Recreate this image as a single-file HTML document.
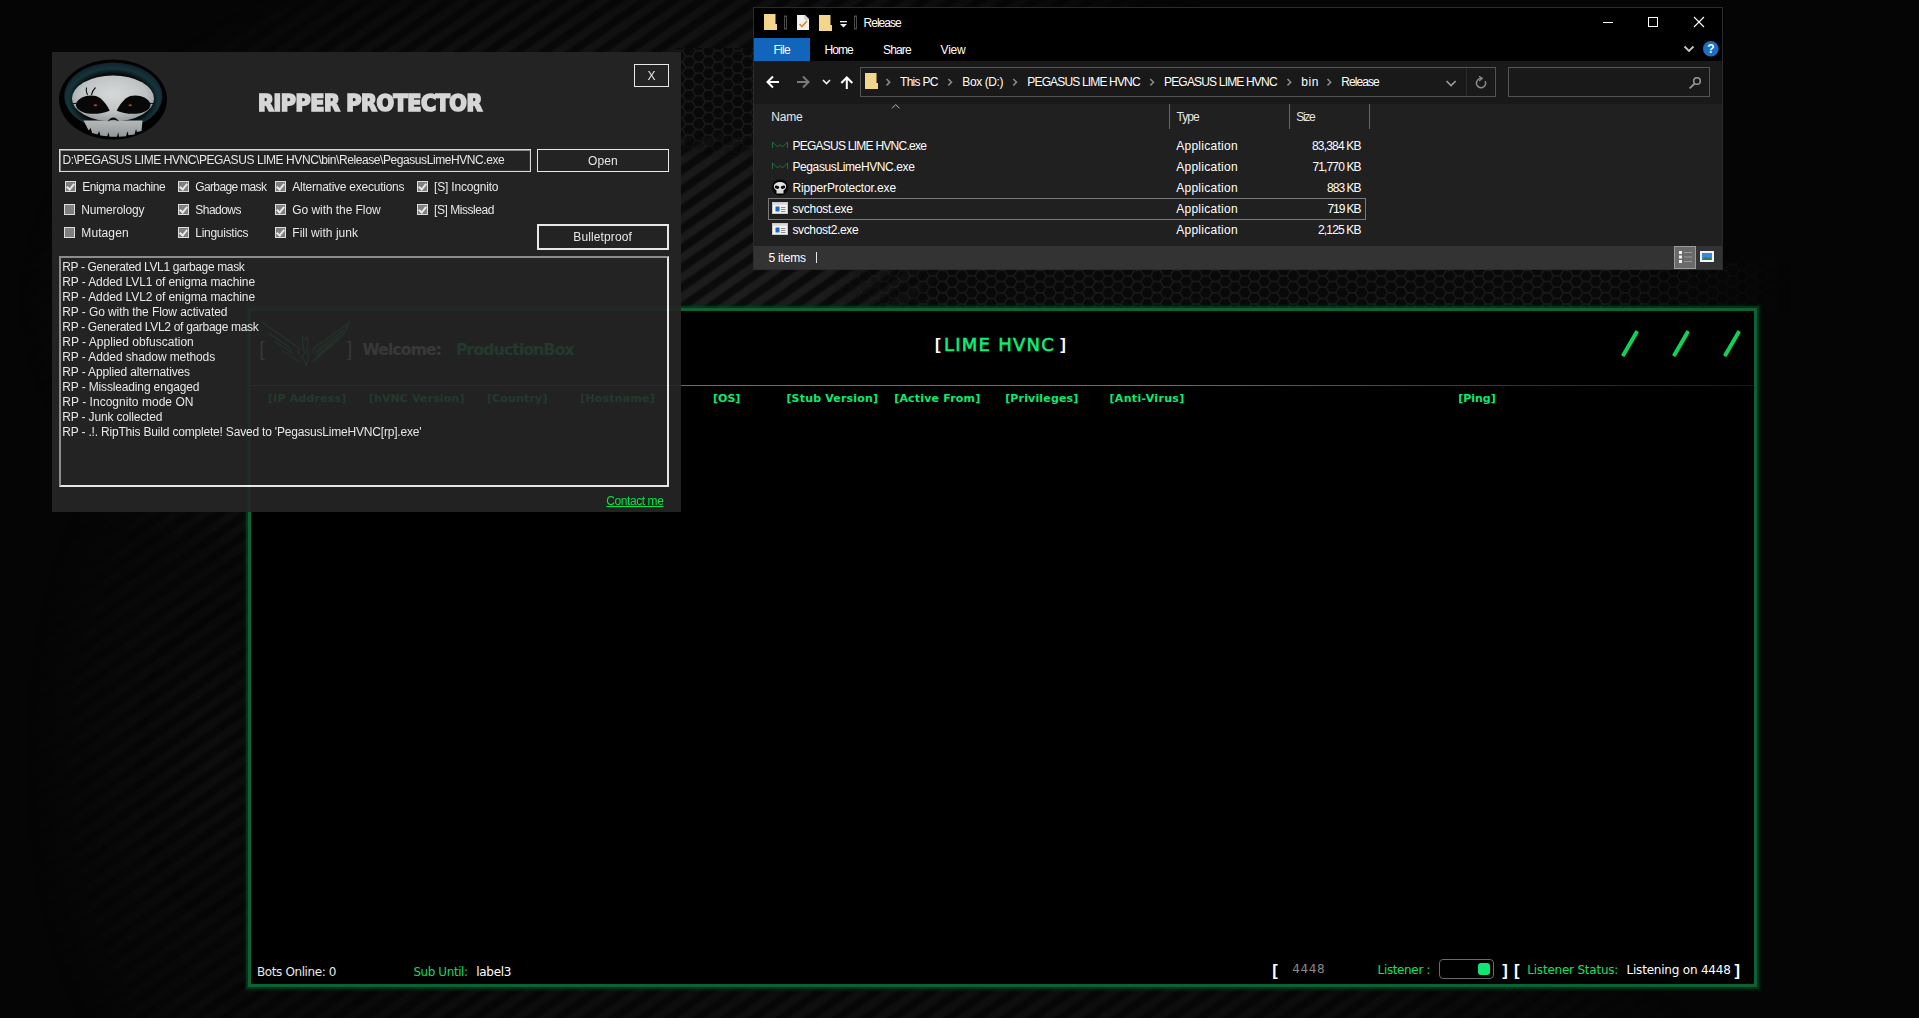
<!DOCTYPE html>
<html lang="en">
<head>
<meta charset="utf-8">
<title>Desktop</title>
<style>
*{box-sizing:border-box;margin:0;padding:0}
html,body{width:1919px;height:1018px;overflow:hidden;background:#060606}
body{position:relative;font-family:"Liberation Sans",sans-serif}
.abs{position:absolute}
.t{position:absolute;white-space:pre;display:block}
#desk{position:absolute;left:0;top:0;width:1919px;height:1018px;overflow:hidden;background:#050505}
#desk .stripes{position:absolute;left:0;top:0;width:1919px;height:1018px;
  background:repeating-linear-gradient(145deg,#0b0b0b 0,#0b0b0b 5px,#1d1d1d 8px,#1d1d1d 13px,#0b0b0b 16px);
  -webkit-mask-image:radial-gradient(ellipse 700px 400px at 720px 300px,#000 0%,rgba(0,0,0,.85) 40%,rgba(0,0,0,.5) 70%,rgba(0,0,0,.2) 90%,rgba(0,0,0,0) 100%),
    radial-gradient(ellipse 800px 130px at 900px 1030px,rgba(0,0,0,.42) 0%,rgba(0,0,0,.3) 60%,rgba(0,0,0,0) 100%),
    radial-gradient(ellipse 190px 380px at 215px 760px,rgba(0,0,0,.35) 0%,rgba(0,0,0,0) 100%);
  mask-image:radial-gradient(ellipse 700px 400px at 720px 300px,#000 0%,rgba(0,0,0,.85) 40%,rgba(0,0,0,.5) 70%,rgba(0,0,0,.2) 90%,rgba(0,0,0,0) 100%),
    radial-gradient(ellipse 800px 130px at 900px 1030px,rgba(0,0,0,.42) 0%,rgba(0,0,0,.3) 60%,rgba(0,0,0,0) 100%),
    radial-gradient(ellipse 190px 380px at 215px 760px,rgba(0,0,0,.35) 0%,rgba(0,0,0,0) 100%)}
#desk svg{position:absolute;left:0;top:0}
/* ---------- HVNC ---------- */
#hv{position:absolute;left:248px;top:308px;width:1509px;height:679px;background:#000;
  border:3px solid #0b6232;box-shadow:0 0 0 2px rgba(8,72,36,.55),0 0 2px 3.500px rgba(8,60,30,.35)}
#hv .line{position:absolute;left:0;top:74px;width:1503px;height:1px;
  background:linear-gradient(90deg,#0c7a3c 0%,#12a352 35%,#12a352 60%,#0a5a2b 80%,#04200f 100%)}
.slash{position:absolute;width:3.6px;height:29px;margin-left:-.3px;background:#10d258;transform:rotate(30deg);transform-origin:50% 50%;border-radius:1px}
#tog{position:absolute;left:1188px;top:648px;width:55px;height:20px;border:1px solid #6a6a6a;border-radius:4px}
#tog i{position:absolute;left:38px;top:3px;width:12px;height:12px;background:#10e673;border-radius:3px}
/* ---------- Explorer ---------- */
#exp{position:absolute;left:754px;top:8px;width:968px;height:261px;background:#202020;overflow:hidden;
  box-shadow:0 0 0 1px #2b2b2b}
#exp .title{position:absolute;left:0;top:0;width:968px;height:53px;background:#000}
#exp .filetab{position:absolute;left:0;top:30px;width:56px;height:23px;background:#1165bb}
#exp .addr{position:absolute;left:0;top:53px;width:968px;height:43px;background:#191919}
#exp .abox{position:absolute;left:106px;top:59px;width:636px;height:30px;border:1px solid #535353}
#exp .abox .div{position:absolute;left:605px;top:0;width:1px;height:28px;background:#2b2b2b}
#exp .sbox{position:absolute;left:754px;top:59px;width:202px;height:30px;border:1px solid #535353}
#exp .cdiv{position:absolute;top:96px;width:1px;height:25px;background:#636363}
#exp .sel{position:absolute;left:14px;top:190px;width:598px;height:22px;border:1px solid #7a7a7a}
#exp .status{position:absolute;left:0;top:238px;width:968px;height:23px;background:#333}
#exp .status .sep{position:absolute;left:62px;top:6px;width:1px;height:11px;background:#e6e6e6}
/* ---------- Ripper ---------- */
#rip{position:absolute;left:52px;top:52px;width:629px;height:460px;background:#262626;opacity:.9}
#rip .btn{position:absolute;border:1px solid #fff}
#rip .path{position:absolute;left:7px;top:97px;width:472px;height:23px;border:1px solid #f0f0f0;box-shadow:inset 1px 1px 0 #9a9a9a, inset -1px -1px 0 #3a3a3a}
#rip .log{position:absolute;left:7px;top:204px;width:610px;height:231px;border:2px solid;border-color:#9a9a9a #fff #fff #9a9a9a}
.cb{position:absolute;width:11px;height:11px;border:1px solid #f4f4f4;background:#8c8c8c}
.cb.on:after{content:"";position:absolute;left:2px;top:0px;width:3px;height:6px;border:solid #fff;border-width:0 2px 2px 0;transform:rotate(40deg)}
</style>
</head>
<body>
<div id="desk">
  <div class="stripes"></div>
  <svg width="1919" height="1018" viewBox="0 0 1919 1018">
    <defs>
      <pattern id="hex" width="19.5" height="11.26" patternUnits="userSpaceOnUse">
        <rect width="19.5" height="11.26" fill="#090909"/>
        <path d="M0 5.63L3.250 0L9.750 0L13 5.63L9.750 11.26L3.250 11.26ZM13 5.63L19.5 5.63" fill="none" stroke="#1d1d1d" stroke-width="1.2"/>
      </pattern>
      <linearGradient id="hfade" x1="0" y1="0" x2="1" y2="0"><stop offset="0" stop-color="#fff" stop-opacity="0"/><stop offset=".12" stop-color="#fff"/><stop offset=".8" stop-color="#fff"/><stop offset="1" stop-color="#fff" stop-opacity="0"/></linearGradient>
      <mask id="hm"><rect x="830" y="262" width="960" height="50" fill="url(#hfade)"/></mask>
      <linearGradient id="vfade" x1="0" y1="0" x2="0" y2="1"><stop offset="0" stop-color="#fff"/><stop offset=".75" stop-color="#fff"/><stop offset="1" stop-color="#fff" stop-opacity="0"/></linearGradient>
      <mask id="hm2"><rect x="676" y="48" width="90" height="110" fill="url(#vfade)"/></mask>
    </defs>
    <rect x="830" y="262" width="960" height="50" fill="url(#hex)" mask="url(#hm)"/>
    <rect x="52" y="52" width="629" height="460" fill="#0b0b0b"/>
    <rect x="676" y="48" width="90" height="110" fill="url(#hex)" mask="url(#hm2)"/>
  </svg>
</div>

<!-- ================= HVNC window ================= -->
<div id="hv">
  <div class="line"></div>
  <div class="slash" style="left:1377.2px;top:17.5px"></div>
  <div class="slash" style="left:1428.6px;top:17.5px"></div>
  <div class="slash" style="left:1479.6px;top:17.5px"></div>
  <div id="tog"><i></i></div>
<svg class="abs" style="left:4px;top:4px" width="110" height="60" viewBox="255 315 110 60">
<g fill="none" stroke="#12a85a" stroke-width="1.1" stroke-linecap="round">
  <path d="M262 322L298 347.500q2.500 1.500 .5 3.500q-.8 1.500 1.500 2.500"/>
  <path d="M268.200 333L289 347q2.500 2 3 6.500"/>
  <path d="M274.300 341.300L287 349q2.500 1.500 3 4" />
  <path d="M282 350.300L298.700 361.500" stroke-dasharray="1.500 1.200"/>
  <path d="M302.300 336.500l2.500 3l2.300-3l.8 6l-1.500 9.500l2.500 3.500l-1.300 5l-1.800 5.800l-1.200-5.800l-2.800-4.200l3-3.300l-2-7.500z"/>
  <path d="M349.600 322.300L314 347.500q-1.500 3-.800 6M349.600 322.300q-4 12-14 20L313.200 361.500M344 330L316.500 352M339 337L318.500 354.500M331 345L315 359"/>
</g>
<path d="M349.600 322.300L316 347q-2 4 -1 8l-1.800 6.500L335.600 342.300q9-8 14-20z" fill="#0e8a4a" opacity=".35"/>
</svg>

<span class="t" style='left:684.0px;top:26.0px;font:700 16.6px/16.6px "Liberation Sans", sans-serif;letter-spacing:0.000px;color:#fff;'>[</span>
<span class="t" style='left:693.0px;top:25.0px;font:400 18px/18px "DejaVu Sans", "Liberation Sans", sans-serif;letter-spacing:1.241px;color:#0af07a;-webkit-text-stroke:.55px #0af07a;'>LIME HVNC</span>
<span class="t" style='left:809.2px;top:26.0px;font:700 16.6px/16.6px "Liberation Sans", sans-serif;letter-spacing:0.000px;color:#fff;'>]</span>
<span class="t" style='left:16.9px;top:82.0px;font:700 11px/11px "DejaVu Sans", "Liberation Sans", sans-serif;letter-spacing:0.195px;color:#0ce96f;'>[IP Address]</span>
<span class="t" style='left:117.8px;top:82.0px;font:700 11px/11px "DejaVu Sans", "Liberation Sans", sans-serif;letter-spacing:0.124px;color:#0ce96f;'>[hVNC Version]</span>
<span class="t" style='left:235.9px;top:82.0px;font:700 11px/11px "DejaVu Sans", "Liberation Sans", sans-serif;letter-spacing:0.166px;color:#0ce96f;'>[Country]</span>
<span class="t" style='left:329.2px;top:82.0px;font:700 11px/11px "DejaVu Sans", "Liberation Sans", sans-serif;letter-spacing:0.192px;color:#0ce96f;'>[Hostname]</span>
<span class="t" style='left:462.0px;top:82.0px;font:700 11px/11px "DejaVu Sans", "Liberation Sans", sans-serif;letter-spacing:-0.000px;color:#0ce96f;'>[OS]</span>
<span class="t" style='left:535.4px;top:82.0px;font:700 11px/11px "DejaVu Sans", "Liberation Sans", sans-serif;letter-spacing:0.181px;color:#0ce96f;'>[Stub Version]</span>
<span class="t" style='left:643.2px;top:82.0px;font:700 11px/11px "DejaVu Sans", "Liberation Sans", sans-serif;letter-spacing:0.183px;color:#0ce96f;'>[Active From]</span>
<span class="t" style='left:754.2px;top:82.0px;font:700 11px/11px "DejaVu Sans", "Liberation Sans", sans-serif;letter-spacing:0.160px;color:#0ce96f;'>[Privileges]</span>
<span class="t" style='left:858.5px;top:82.0px;font:700 11px/11px "DejaVu Sans", "Liberation Sans", sans-serif;letter-spacing:0.331px;color:#0ce96f;'>[Anti-Virus]</span>
<span class="t" style='left:1207.3px;top:82.0px;font:700 11px/11px "DejaVu Sans", "Liberation Sans", sans-serif;letter-spacing:-0.033px;color:#0ce96f;'>[Ping]</span>
<span class="t" style='left:8.2px;top:29.0px;font:400 19.9px/19.9px "Liberation Sans", sans-serif;letter-spacing:0.000px;color:#ddd;'>[</span>
<span class="t" style='left:95.8px;top:29.0px;font:400 19.9px/19.9px "Liberation Sans", sans-serif;letter-spacing:0.000px;color:#ddd;'>]</span>
<span class="t" style='left:111.4px;top:32.0px;font:700 15.5px/15.5px "DejaVu Sans", "Liberation Sans", sans-serif;letter-spacing:-0.781px;color:#e8e8e8;'>Welcome:</span>
<span class="t" style='left:205.0px;top:32.0px;font:700 15.5px/15.5px "DejaVu Sans", "Liberation Sans", sans-serif;letter-spacing:-0.778px;color:#0ce96f;'>ProductionBox</span>
<span class="t" style='left:6.0px;top:655.0px;font:400 12px/12px "DejaVu Sans", "Liberation Sans", sans-serif;letter-spacing:-0.393px;color:#e8e8e8;'>Bots Online: 0</span>
<span class="t" style='left:162.4px;top:655.0px;font:400 12px/12px "DejaVu Sans", "Liberation Sans", sans-serif;letter-spacing:-0.424px;color:#12d860;'>Sub Until:</span>
<span class="t" style='left:225.2px;top:655.0px;font:400 12px/12px "DejaVu Sans", "Liberation Sans", sans-serif;letter-spacing:-0.284px;color:#fff;'>label3</span>
<span class="t" style='left:1021.2px;top:652.0px;font:700 16.6px/16.6px "Liberation Sans", sans-serif;letter-spacing:0.000px;color:#fff;'>[</span>
<span class="t" style='left:1041.2px;top:652.0px;font:400 12px/12px "DejaVu Sans", "Liberation Sans", sans-serif;letter-spacing:0.632px;color:#8a8a8a;'>4448</span>
<span class="t" style='left:1126.6px;top:653.0px;font:400 12px/12px "DejaVu Sans", "Liberation Sans", sans-serif;letter-spacing:-0.366px;color:#10e060;'>Listener :</span>
<span class="t" style='left:1251.2px;top:652.0px;font:700 16.6px/16.6px "Liberation Sans", sans-serif;letter-spacing:0.000px;color:#fff;'>]</span>
<span class="t" style='left:1263.1px;top:652.0px;font:700 16.6px/16.6px "Liberation Sans", sans-serif;letter-spacing:0.000px;color:#fff;'>[</span>
<span class="t" style='left:1276.3px;top:653.0px;font:400 12px/12px "DejaVu Sans", "Liberation Sans", sans-serif;letter-spacing:-0.222px;color:#10e060;'>Listener Status:</span>
<span class="t" style='left:1375.5px;top:653.0px;font:400 12px/12px "DejaVu Sans", "Liberation Sans", sans-serif;letter-spacing:-0.206px;color:#fff;'>Listening on 4448</span>
<span class="t" style='left:1483.5px;top:652.0px;font:700 16.6px/16.6px "Liberation Sans", sans-serif;letter-spacing:0.000px;color:#fff;'>]</span>
</div>

<!-- ================= Explorer window ================= -->
<div id="exp">
  <div class="title"></div>
  <div class="filetab"></div>
  <div class="addr"></div>
  <div class="abox"><div class="div"></div></div>
  <div class="sbox"></div>
  <div class="cdiv" style="left:415px"></div>
  <div class="cdiv" style="left:535px"></div>
  <div class="cdiv" style="left:615px"></div>
  <div class="sel"></div>
  <div class="status"><div class="sep"></div></div>
<svg class="abs" style="left:0;top:0" width="968" height="261" viewBox="0 0 968 261">
<g transform="translate(-754,-8)">
  <!-- title bar quick-access icons -->
  <path d="M764 14h11.5v10h1.5v6h-13z" fill="#f3d58c"/>
  <rect x="784.5" y="16" width="2" height="13" fill="none" stroke="#4a4a4a" stroke-width="1"/>
  <path d="M797 15h8l4 4v11h-12z" fill="#f2f2f2"/>
  <path d="M805 15v4h4" fill="none" stroke="#b8b8b8" stroke-width="1"/>
  <path d="M799.5 24l2.5 2.5l5-5.5" fill="none" stroke="#e08a1e" stroke-width="1.6"/>
  <path d="M819 15h11.5v10h1.5v6h-13z" fill="#f3d58c"/>
  <rect x="840" y="21" width="7" height="1.3" fill="#f0f0f0"/>
  <path d="M840 24h7l-3.5 3.5z" fill="#f0f0f0"/>
  <rect x="854.5" y="16" width="2" height="13" fill="none" stroke="#4a4a4a" stroke-width="1"/>
  <!-- window controls -->
  <rect x="1603" y="22" width="10" height="1" fill="#fff"/>
  <rect x="1648.5" y="17.5" width="9" height="9" fill="none" stroke="#fff" stroke-width="1"/>
  <path d="M1694 17l10 10M1704 17l-10 10" stroke="#fff" stroke-width="1.1" fill="none"/>
  <!-- ribbon collapse + help -->
  <path d="M1684.5 46.5l4.5 4.5l4.5-4.5" fill="none" stroke="#c8c8c8" stroke-width="1.8"/>
  <circle cx="1710.8" cy="48.8" r="7.8" fill="#1a6fc6"/>
  <text x="1710.8" y="53" font-family="Liberation Sans, sans-serif" font-weight="700" font-size="12" fill="#fff" text-anchor="middle">?</text>
  <!-- nav arrows -->
  <path d="M779 82h-11.5M773 76.5l-5.5 5.5l5.5 5.5" fill="none" stroke="#fff" stroke-width="2"/>
  <path d="M797 82h11.5M803 76.5l5.5 5.5l-5.5 5.5" fill="none" stroke="#7a7a7a" stroke-width="2"/>
  <path d="M823 80l3.5 3.5l3.5-3.5" fill="none" stroke="#f0f0f0" stroke-width="1.6"/>
  <path d="M846.8 89v-11.5M841.3 83l5.5-5.5l5.5 5.5" fill="none" stroke="#fff" stroke-width="2"/>
  <!-- address bar -->
  <path d="M865 73h11.5v10h1.5v6h-13z" fill="#f3d58c"/>
  <g fill="none" stroke="#8c8c8c" stroke-width="1.5">
    <path d="M886.5 79l3.2 3.2l-3.2 3.2"/>
    <path d="M948.3 79l3.2 3.2l-3.2 3.2"/>
    <path d="M1013.3 79l3.2 3.2l-3.2 3.2"/>
    <path d="M1150.3 79l3.2 3.2l-3.2 3.2"/>
    <path d="M1287.5 79l3.2 3.2l-3.2 3.2"/>
    <path d="M1327.5 79l3.2 3.2l-3.2 3.2"/>
    <path d="M1446.5 81l4.6 4.6l4.6-4.6" stroke="#9a9a9a" stroke-width="1.7"/>
  </g>
  <path d="M1481 78.5a4.6 4.6 0 1 0 4.2 2.6" fill="none" stroke="#8c8c8c" stroke-width="1.5"/>
  <path d="M1479 76.2l3.2 2.2l-3 2.6" fill="none" stroke="#8c8c8c" stroke-width="1.3"/>
  <circle cx="1697" cy="81" r="3.3" fill="none" stroke="#9a9a9a" stroke-width="1.5"/>
  <path d="M1694.6 83.6l-5 4.8" stroke="#9a9a9a" stroke-width="1.7"/>
  <!-- sort indicator -->
  <path d="M892 108.3l3.7-3.7l3.7 3.7" fill="none" stroke="#b4b4b4" stroke-width="1"/>
  <!-- file icons -->
  <g fill="none" stroke="#1f7040" stroke-width="1">
    <path d="M772.5 148v-6l5 5l2.5-2.5l2.500 2.500l5-5v6"/>
  </g>
  <g fill="none" stroke="#1f7040" stroke-width="1">
    <path d="M772.5 169v-6l5 5l2.5-2.5l2.500 2.500l5-5v6"/>
  </g>
  <!-- skull icon -->
  <ellipse cx="780" cy="187.500" rx="8" ry="8" fill="#050505"/>
  <ellipse cx="780" cy="186.500" rx="6.2" ry="4.600" fill="#e4e6e6"/>
  <rect x="776.500" y="190" width="7" height="3.500" fill="#d8dada"/>
  <ellipse cx="777" cy="187.300" rx="2.300" ry="1.600" fill="#0a0a0a" transform="rotate(14 777 187.300)"/>
  <ellipse cx="783" cy="187.300" rx="2.300" ry="1.600" fill="#0a0a0a" transform="rotate(-14 783 187.300)"/>
  <!-- svchost icons -->
  <g id="svc">
    <rect x="772.5" y="202.500" width="15" height="11" fill="#f4f4f4" stroke="#c8c8c8" stroke-width="1"/>
    <rect x="773" y="203" width="14" height="2" fill="#dcdcdc"/>
    <rect x="775.500" y="206.500" width="4" height="5" fill="#1a66c2"/>
    <rect x="781" y="207" width="4.500" height="1" fill="#8a8a8a"/>
    <rect x="781" y="209" width="4.500" height="1" fill="#8a8a8a"/>
    <rect x="781" y="211" width="4.500" height="1" fill="#8a8a8a"/>
  </g>
  <g transform="translate(0,21)">
    <rect x="772.5" y="202.500" width="15" height="11" fill="#f4f4f4" stroke="#c8c8c8" stroke-width="1"/>
    <rect x="773" y="203" width="14" height="2" fill="#dcdcdc"/>
    <rect x="775.500" y="206.500" width="4" height="5" fill="#1a66c2"/>
    <rect x="781" y="207" width="4.500" height="1" fill="#8a8a8a"/>
    <rect x="781" y="209" width="4.500" height="1" fill="#8a8a8a"/>
    <rect x="781" y="211" width="4.500" height="1" fill="#8a8a8a"/>
  </g>
  <!-- status bar view buttons -->
  <rect x="1674.500" y="246.500" width="21" height="22" fill="#6a6a6a" stroke="#9c9c9c" stroke-width="1"/>
  <g fill="#f0f0f0"><rect x="1679" y="251" width="3" height="3"/><rect x="1679" y="255.500" width="3" height="3"/><rect x="1679" y="260" width="3" height="3"/></g>
  <g fill="#9a9a9a"><rect x="1684" y="252" width="8" height="1"/><rect x="1684" y="256.500" width="8" height="1"/><rect x="1684" y="261" width="8" height="1"/></g>
  <rect x="1700" y="251" width="14" height="11" fill="#f4f4f4"/>
  <rect x="1702" y="253" width="10" height="7" fill="#3a8ad8"/>
  <path d="M1702 260l3.500-3.500l2.500 2l2-1.500l2 3z" fill="#2e7d4a"/>
</g>
</svg>

<span class="t" style='left:109.5px;top:9.0px;font:400 12px/12px "Liberation Sans", sans-serif;letter-spacing:-0.976px;color:#fff;'>Release</span>
<span class="t" style='left:19.5px;top:36.0px;font:400 12px/12px "Liberation Sans", sans-serif;letter-spacing:-0.721px;color:#fff;'>File</span>
<span class="t" style='left:70.4px;top:36.0px;font:400 12px/12px "Liberation Sans", sans-serif;letter-spacing:-0.912px;color:#fff;'>Home</span>
<span class="t" style='left:129.0px;top:36.0px;font:400 12px/12px "Liberation Sans", sans-serif;letter-spacing:-0.837px;color:#fff;'>Share</span>
<span class="t" style='left:186.6px;top:36.0px;font:400 12px/12px "Liberation Sans", sans-serif;letter-spacing:-0.242px;color:#fff;'>View</span>
<span class="t" style='left:146.0px;top:68.0px;font:400 12px/12px "Liberation Sans", sans-serif;letter-spacing:-0.701px;color:#fff;'>This PC</span>
<span class="t" style='left:208.3px;top:68.0px;font:400 12px/12px "Liberation Sans", sans-serif;letter-spacing:-0.401px;color:#fff;'>Box (D:)</span>
<span class="t" style='left:273.3px;top:68.0px;font:400 12px/12px "Liberation Sans", sans-serif;letter-spacing:-0.839px;color:#fff;'>PEGASUS LIME HVNC</span>
<span class="t" style='left:410.0px;top:68.0px;font:400 12px/12px "Liberation Sans", sans-serif;letter-spacing:-0.821px;color:#fff;'>PEGASUS LIME HVNC</span>
<span class="t" style='left:547.3px;top:68.0px;font:400 12px/12px "Liberation Sans", sans-serif;letter-spacing:0.580px;color:#fff;'>bin</span>
<span class="t" style='left:587.3px;top:68.0px;font:400 12px/12px "Liberation Sans", sans-serif;letter-spacing:-0.942px;color:#fff;'>Release</span>
<span class="t" style='left:17.3px;top:103.0px;font:400 12px/12px "Liberation Sans", sans-serif;letter-spacing:-0.212px;color:#e6e6e6;'>Name</span>
<span class="t" style='left:422.5px;top:103.0px;font:400 12px/12px "Liberation Sans", sans-serif;letter-spacing:-0.947px;color:#e6e6e6;'>Type</span>
<span class="t" style='left:542.3px;top:103.0px;font:400 12px/12px "Liberation Sans", sans-serif;letter-spacing:-1.323px;color:#e6e6e6;'>Size</span>
<span class="t" style='left:38.4px;top:132.0px;font:400 12px/12px "Liberation Sans", sans-serif;letter-spacing:-0.745px;color:#fff;'>PEGASUS LIME HVNC.exe</span>
<span class="t" style='left:422.2px;top:132.0px;font:400 12px/12px "Liberation Sans", sans-serif;letter-spacing:0.267px;color:#fff;'>Application</span>
<span class="t" style='left:558.0px;top:132.0px;font:400 12px/12px "Liberation Sans", sans-serif;letter-spacing:-0.818px;color:#fff;'>83,384 KB</span>
<span class="t" style='left:38.4px;top:153.0px;font:400 12px/12px "Liberation Sans", sans-serif;letter-spacing:-0.384px;color:#fff;'>PegasusLimeHVNC.exe</span>
<span class="t" style='left:422.2px;top:153.0px;font:400 12px/12px "Liberation Sans", sans-serif;letter-spacing:0.267px;color:#fff;'>Application</span>
<span class="t" style='left:558.5px;top:153.0px;font:400 12px/12px "Liberation Sans", sans-serif;letter-spacing:-0.880px;color:#fff;'>71,770 KB</span>
<span class="t" style='left:38.4px;top:174.0px;font:400 12px/12px "Liberation Sans", sans-serif;letter-spacing:-0.132px;color:#fff;'>RipperProtector.exe</span>
<span class="t" style='left:422.2px;top:174.0px;font:400 12px/12px "Liberation Sans", sans-serif;letter-spacing:0.267px;color:#fff;'>Application</span>
<span class="t" style='left:573.0px;top:174.0px;font:400 12px/12px "Liberation Sans", sans-serif;letter-spacing:-0.972px;color:#fff;'>883 KB</span>
<span class="t" style='left:38.4px;top:195.0px;font:400 12px/12px "Liberation Sans", sans-serif;letter-spacing:-0.279px;color:#fff;'>svchost.exe</span>
<span class="t" style='left:422.2px;top:195.0px;font:400 12px/12px "Liberation Sans", sans-serif;letter-spacing:0.267px;color:#fff;'>Application</span>
<span class="t" style='left:573.5px;top:195.0px;font:400 12px/12px "Liberation Sans", sans-serif;letter-spacing:-1.072px;color:#fff;'>719 KB</span>
<span class="t" style='left:38.4px;top:216.0px;font:400 12px/12px "Liberation Sans", sans-serif;letter-spacing:-0.342px;color:#fff;'>svchost2.exe</span>
<span class="t" style='left:422.2px;top:216.0px;font:400 12px/12px "Liberation Sans", sans-serif;letter-spacing:0.267px;color:#fff;'>Application</span>
<span class="t" style='left:564.0px;top:216.0px;font:400 12px/12px "Liberation Sans", sans-serif;letter-spacing:-0.838px;color:#fff;'>2,125 KB</span>
<span class="t" style='left:14.5px;top:244.0px;font:400 12px/12px "Liberation Sans", sans-serif;letter-spacing:-0.196px;color:#fff;'>5 items</span>
</div>

<!-- ================= Ripper Protector window ================= -->
<div id="rip">
  <div class="btn" style="left:582px;top:12px;width:35px;height:23px"></div>
  <div class="btn" style="left:485px;top:97px;width:132px;height:23px"></div>
  <div class="btn" style="left:485px;top:172px;width:132px;height:26px;border-width:2px"></div>
  <div class="path"></div>
  <div class="log"></div>
  <div class="cb on" style="left:13px;top:129px"></div>
  <div class="cb" style="left:12px;top:152px"></div>
  <div class="cb" style="left:12px;top:175px"></div>
  <div class="cb on" style="left:126px;top:129px"></div>
  <div class="cb on" style="left:126px;top:152px"></div>
  <div class="cb on" style="left:126px;top:175px"></div>
  <div class="cb on" style="left:223px;top:129px"></div>
  <div class="cb on" style="left:223px;top:152px"></div>
  <div class="cb on" style="left:223px;top:175px"></div>
  <div class="cb on" style="left:365px;top:129px"></div>
  <div class="cb on" style="left:365px;top:152px"></div>
<svg class="abs" style="left:0;top:0" width="130" height="100" viewBox="0 0 130 100">
<defs>
  <radialGradient id="sk" cx="50%" cy="40%" r="65%"><stop offset="0" stop-color="#eef0f0"/><stop offset=".6" stop-color="#d4d8d8"/><stop offset="1" stop-color="#9ea4a8"/></radialGradient>
  <radialGradient id="hood" cx="50%" cy="55%" r="55%"><stop offset=".70" stop-color="#070c10"/><stop offset=".84" stop-color="#173a40"/><stop offset="1" stop-color="#14222e"/></radialGradient>
  <linearGradient id="teeth" x1="0" y1="0" x2="0" y2="1"><stop offset="0" stop-color="#c8cccc"/><stop offset="1" stop-color="#a0a6aa"/></linearGradient>
</defs>
<g transform="translate(-52,-52)">
  <ellipse cx="113" cy="99.5" rx="54" ry="40" fill="#020202"/>
  <ellipse cx="113.3" cy="96" rx="49" ry="33.500" fill="url(#hood)"/>
  <path d="M64.500 100a49 33 0 0 0 97.600 0a49 40 0 0 1-97.600 0z" fill="#020202"/>
  <!-- jaw + teeth -->
  <path d="M83.500 120.500l59 0l-1 10.500l-4.500 1l-1-3l-1.500 5.500l-6 .8l-1-4l-1.500 5l-7 .5l-.8-4.500l-1.200 4.500l-7.500 0l-1-4.500l-1.200 4l-7-.8l-1.200-4.500l-1.500 3.500l-5.500-1.500l-1.500-5l-2 2.500z" fill="url(#teeth)"/>
  <!-- cranium -->
  <ellipse cx="113" cy="98.500" rx="41" ry="23" fill="url(#sk)"/>
  <!-- eyes -->
  <path d="M76 103.4C79 97 88 94 96 96C102 98 107 105 109.700 110.700C104 113 96 114.500 88 113.500C80 112 75 108 76 103.400Z" fill="#080808"/>
  <path d="M150.400 103.400C147.400 97 138.400 94 130.400 96C124.400 98 119.400 105 116.700 110.700C122.400 113 130.400 114.500 138.400 113.500C146.400 112 151.400 108 150.400 103.400Z" fill="#080808"/>
  <path d="M72.500 103.600l4 -.3M153.900 103.600l-4 -.3" stroke="#111" stroke-width="1" fill="none"/>
  <path d="M87.500 95q-2-4-1-7.500M91.500 95q.5-4 4-7.500" stroke="#111" stroke-width="1.1" fill="none"/>
  <ellipse cx="95.400" cy="105.300" rx="1.800" ry="1" fill="#d8401c"/>
  <ellipse cx="130.200" cy="105.300" rx="1.800" ry="1" fill="#d8401c"/>
  <!-- nose -->
  <path d="M107.500 121.500q5.800-8 11.600 0q-5.800-3.400-11.600 0z" fill="#0a0a0a"/>
</g>
</svg>

<span class="t" style='left:595.5px;top:18.0px;font:400 12px/12px "Liberation Sans", sans-serif;letter-spacing:0.000px;color:#fff;'>X</span>
<span class="t" style='left:536.0px;top:103.0px;font:400 12px/12px "Liberation Sans", sans-serif;letter-spacing:0.106px;color:#fff;'>Open</span>
<span class="t" style='left:521.3px;top:179.0px;font:400 12px/12px "Liberation Sans", sans-serif;letter-spacing:0.126px;color:#fff;'>Bulletproof</span>
<span class="t" style='left:10.5px;top:102.0px;font:400 12px/12px "Liberation Sans", sans-serif;letter-spacing:-0.425px;color:#fff;'>D:\PEGASUS LIME HVNC\PEGASUS LIME HVNC\bin\Release\PegasusLimeHVNC.exe</span>
<span class="t" style='left:30.3px;top:129.0px;font:400 12px/12px "Liberation Sans", sans-serif;letter-spacing:-0.462px;color:#fff;'>Enigma machine</span>
<span class="t" style='left:29.3px;top:152.0px;font:400 12px/12px "Liberation Sans", sans-serif;letter-spacing:-0.177px;color:#fff;'>Numerology</span>
<span class="t" style='left:29.3px;top:175.0px;font:400 12px/12px "Liberation Sans", sans-serif;letter-spacing:0.096px;color:#fff;'>Mutagen</span>
<span class="t" style='left:143.3px;top:129.0px;font:400 12px/12px "Liberation Sans", sans-serif;letter-spacing:-0.646px;color:#fff;'>Garbage mask</span>
<span class="t" style='left:143.3px;top:152.0px;font:400 12px/12px "Liberation Sans", sans-serif;letter-spacing:-0.528px;color:#fff;'>Shadows</span>
<span class="t" style='left:143.3px;top:175.0px;font:400 12px/12px "Liberation Sans", sans-serif;letter-spacing:-0.283px;color:#fff;'>Linguistics</span>
<span class="t" style='left:240.3px;top:129.0px;font:400 12px/12px "Liberation Sans", sans-serif;letter-spacing:-0.248px;color:#fff;'>Alternative executions</span>
<span class="t" style='left:240.3px;top:152.0px;font:400 12px/12px "Liberation Sans", sans-serif;letter-spacing:-0.067px;color:#fff;'>Go with the Flow</span>
<span class="t" style='left:240.3px;top:175.0px;font:400 12px/12px "Liberation Sans", sans-serif;letter-spacing:0.027px;color:#fff;'>Fill with junk</span>
<span class="t" style='left:382.0px;top:129.0px;font:400 12px/12px "Liberation Sans", sans-serif;letter-spacing:-0.186px;color:#fff;'>[S] Incognito</span>
<span class="t" style='left:382.0px;top:152.0px;font:400 12px/12px "Liberation Sans", sans-serif;letter-spacing:-0.444px;color:#fff;'>[S] Misslead</span>
<span class="t" style='left:10.3px;top:209.0px;font:400 12px/12px "Liberation Sans", sans-serif;letter-spacing:-0.361px;color:#fff;'>RP - Generated LVL1 garbage mask</span>
<span class="t" style='left:10.3px;top:224.0px;font:400 12px/12px "Liberation Sans", sans-serif;letter-spacing:-0.111px;color:#fff;'>RP - Added LVL1 of enigma machine</span>
<span class="t" style='left:10.3px;top:239.0px;font:400 12px/12px "Liberation Sans", sans-serif;letter-spacing:-0.111px;color:#fff;'>RP - Added LVL2 of enigma machine</span>
<span class="t" style='left:10.3px;top:254.0px;font:400 12px/12px "Liberation Sans", sans-serif;letter-spacing:-0.090px;color:#fff;'>RP - Go with the Flow activated</span>
<span class="t" style='left:10.3px;top:269.0px;font:400 12px/12px "Liberation Sans", sans-serif;letter-spacing:-0.310px;color:#fff;'>RP - Generated LVL2 of garbage mask</span>
<span class="t" style='left:10.3px;top:284.0px;font:400 12px/12px "Liberation Sans", sans-serif;letter-spacing:0.013px;color:#fff;'>RP - Applied obfuscation</span>
<span class="t" style='left:10.3px;top:299.0px;font:400 12px/12px "Liberation Sans", sans-serif;letter-spacing:-0.099px;color:#fff;'>RP - Added shadow methods</span>
<span class="t" style='left:10.3px;top:314.0px;font:400 12px/12px "Liberation Sans", sans-serif;letter-spacing:-0.140px;color:#fff;'>RP - Applied alternatives</span>
<span class="t" style='left:10.3px;top:329.0px;font:400 12px/12px "Liberation Sans", sans-serif;letter-spacing:-0.147px;color:#fff;'>RP - Missleading engaged</span>
<span class="t" style='left:10.3px;top:344.0px;font:400 12px/12px "Liberation Sans", sans-serif;letter-spacing:0.031px;color:#fff;'>RP - Incognito mode ON</span>
<span class="t" style='left:10.3px;top:359.0px;font:400 12px/12px "Liberation Sans", sans-serif;letter-spacing:-0.167px;color:#fff;'>RP - Junk collected</span>
<span class="t" style='left:10.3px;top:374.0px;font:400 12px/12px "Liberation Sans", sans-serif;letter-spacing:-0.191px;color:#fff;'>RP - .!. RipThis Build complete! Saved to &#x27;PegasusLimeHVNC[rp].exe&#x27;</span>
<span class="t" style='left:554.3px;top:443.0px;font:400 12px/12px "Liberation Sans", sans-serif;letter-spacing:-0.421px;color:#00ff50;text-decoration:underline;'>Contact me</span>
<span class="t" style='left:206.0px;top:40.0px;font:700 23px/23px "DejaVu Sans Condensed", "DejaVu Sans", sans-serif;letter-spacing:-0.437px;color:#ececec;-webkit-text-stroke:1.7px #ececec;'>RIPPER PROTECTOR</span>
</div>
</body>
</html>
